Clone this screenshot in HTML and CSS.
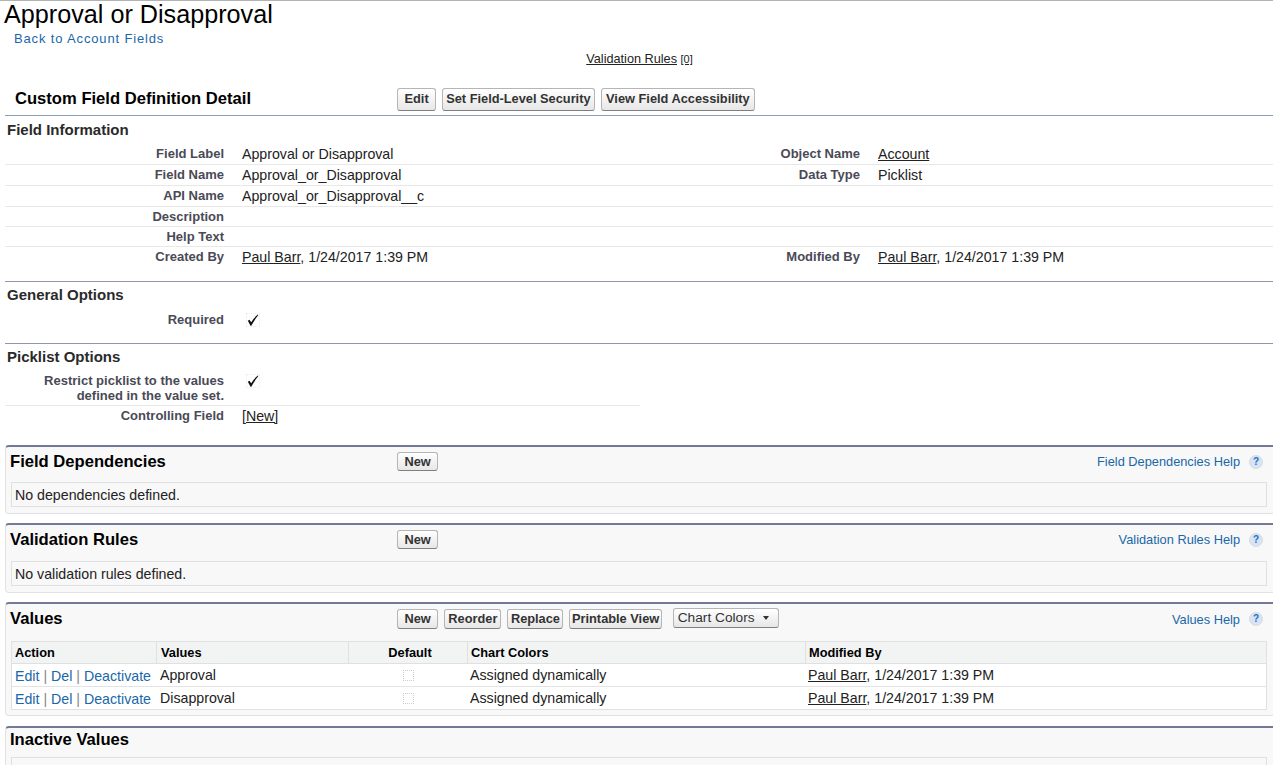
FILE: index.html
```html
<!DOCTYPE html>
<html lang="en">
<head>
<meta charset="utf-8">
<title>Approval or Disapproval</title>
<link rel="stylesheet" href="styles.css">
</head>
<body>
<header class="page-head">
  <h1 class="page-title">Approval or Disapproval</h1>
  <a class="back-link" href="#">Back to Account Fields</a>
  <div class="related"><a class="dark-link" href="#">Validation Rules</a> <a class="dark-link count" href="#">[0]</a></div>
</header>
<section class="detail">
  <div class="detail-bar">
    <h2 class="detail-title">Custom Field Definition Detail</h2>
    <div class="btns">
      <button class="btn wide">Edit</button>
      <button class="btn">Set Field-Level Security</button>
      <button class="btn roomy">View Field Accessibility</button>
    </div>
  </div>
  <h3 class="sub-head first">Field Information</h3>
  <div class="row line h21"><div class="lab">Field Label</div><div class="val">Approval or Disapproval</div><div class="lab">Object Name</div><div class="val"><a class="dark-link" href="#">Account</a></div></div>
  <div class="row line h21"><div class="lab">Field Name</div><div class="val">Approval_or_Disapproval</div><div class="lab">Data Type</div><div class="val">Picklist</div></div>
  <div class="row line h21"><div class="lab">API Name</div><div class="val">Approval_or_Disapproval__c</div><div class="lab"></div><div class="val"></div></div>
  <div class="row line h20"><div class="lab">Description</div><div class="val"></div><div class="lab"></div><div class="val"></div></div>
  <div class="row line h20"><div class="lab">Help Text</div><div class="val"></div><div class="lab"></div><div class="val"></div></div>
  <div class="row h21"><div class="lab">Created By</div><div class="val"><a class="dark-link" href="#">Paul Barr</a>, 1/24/2017 1:39 PM</div><div class="lab">Modified By</div><div class="val"><a class="dark-link" href="#">Paul Barr</a>, 1/24/2017 1:39 PM</div></div>

  <h3 class="sub-head ruled">General Options</h3>
  <div class="row h21"><div class="lab">Required</div><div class="val"><svg class="check" viewBox="2.5 1.5 10 10.5"><path d="M3 7.5 L4.4 6.6 L5.9 8.8 Q8 5 11.8 2 L12.2 2.4 Q8.5 7 6 11.8 L5.3 11.8 Z" fill="#111"/></svg></div></div>

  <h3 class="sub-head ruled second">Picklist Options</h3>
  <div class="half">
    <div class="row line tall"><div class="lab">Restrict picklist to the values<br>defined in the value set.</div><div class="val"><svg class="check" viewBox="2.5 1.5 10 10.5"><path d="M3 7.5 L4.4 6.6 L5.9 8.8 Q8 5 11.8 2 L12.2 2.4 Q8.5 7 6 11.8 L5.3 11.8 Z" fill="#111"/></svg></div></div>
    <div class="row h21"><div class="lab">Controlling Field</div><div class="val"><a class="dark-link" href="#">[New]</a></div></div>
  </div>
</section>

<section class="panel">
  <div class="panel-bar">
    <h2 class="panel-title">Field Dependencies</h2>
    <div class="btns"><button class="btn wide">New</button></div>
    <a class="help" href="#">Field Dependencies Help<span class="q">?</span></a>
  </div>
  <div class="empty">No dependencies defined.</div>
</section>

<section class="panel rules">
  <div class="panel-bar">
    <h2 class="panel-title">Validation Rules</h2>
    <div class="btns"><button class="btn wide">New</button></div>
    <a class="help" href="#">Validation Rules Help<span class="q">?</span></a>
  </div>
  <div class="empty">No validation rules defined.</div>
</section>

<section class="panel values">
  <div class="panel-bar">
    <h2 class="panel-title">Values</h2>
    <div class="btns">
      <button class="btn wide">New</button>
      <button class="btn mid">Reorder</button>
      <button class="btn">Replace</button>
      <button class="btn snug">Printable View</button>
      <button class="btn menu">Chart Colors<span class="caret"></span></button>
    </div>
    <a class="help" href="#">Values Help<span class="q">?</span></a>
  </div>
  <table class="list">
    <thead><tr><th class="c1">Action</th><th class="c2">Values</th><th class="c3">Default</th><th class="c4">Chart Colors</th><th class="c5">Modified By</th></tr></thead>
    <tbody>
      <tr><td class="act"><a class="blue" href="#">Edit</a> <span class="sep">|</span> <a class="blue" href="#">Del</a> <span class="sep">|</span> <a class="blue" href="#">Deactivate</a></td><td class="name">Approval</td><td class="ctr"><span class="box"></span></td><td>Assigned dynamically</td><td><a class="dark-link" href="#">Paul Barr</a>, 1/24/2017 1:39 PM</td></tr>
      <tr><td class="act"><a class="blue" href="#">Edit</a> <span class="sep">|</span> <a class="blue" href="#">Del</a> <span class="sep">|</span> <a class="blue" href="#">Deactivate</a></td><td class="name">Disapproval</td><td class="ctr"><span class="box"></span></td><td>Assigned dynamically</td><td><a class="dark-link" href="#">Paul Barr</a>, 1/24/2017 1:39 PM</td></tr>
    </tbody>
  </table>
</section>

<section class="panel inactive">
  <div class="panel-bar">
    <h2 class="panel-title">Inactive Values</h2>
  </div>
  <div class="empty"></div>
</section>
</body>
</html>
```
FILE: styles.css
```css
html, body { margin: 0; padding: 0; }
html { overflow: hidden; height: 765px; }
body {
  height: 765px; overflow: hidden; box-sizing: border-box;
  border-top: 1px solid #b4b4b4;
  background: #fff; color: #222;
  font: 14.2px/15px "Liberation Sans", Arial, sans-serif;
}
a { text-decoration: none; }
h1, h2, h3 { margin: 0; }
.page-head { padding-left: 4px; }
.page-title { font-size: 25.2px; line-height: 26px; font-weight: 400; color: #000; }
.back-link { display: block; margin: 3px 0 0 10px; color: #1a67a8; font-size: 13px; line-height: 17px; letter-spacing: 0.85px; }
.related { text-align: center; margin: 5px 0 0 2px; line-height: 15px; font-size: 12.7px; height: 15px; }
.dark-link { color: #222; text-decoration: underline; }
.count { font-size: 11px; }
.detail { margin-left: 5px; }
.detail-bar { display: flex; align-items: center; height: 32px; margin-top: 16px; border-bottom: 1px solid #8a9ebe; }
.detail-title { width: 392px; padding-left: 10px; box-sizing: border-box; font-size: 16.6px; line-height: 20px; color: #000; font-weight: 700; }
.btns { display: flex; align-items: center; gap: 6px; }
.btn {
  font: 700 12.8px/14px "Liberation Sans", Arial, sans-serif; color: #333;
  height: 23px; padding: 0 3px; margin: 0;
  border: 1px solid #b5b5b5; border-bottom-color: #7f7f7f; border-radius: 3px;
  background: linear-gradient(#fff, #e9e9e9 90%);
  white-space: nowrap; display: block;
}
.btn.wide { padding: 0 6.5px; }
.btn.roomy { padding: 0 4.5px; }
.sub-head { font-size: 15px; line-height: 16px; color: #2a2a2a; padding-left: 2px; font-weight: 700; }
.sub-head.first { padding-top: 6px; padding-bottom: 6px; }
.sub-head.ruled { border-top: 1px solid #9196ad; margin-top: 14px; padding-top: 5px; padding-bottom: 6px; height: 17px; }
.sub-head.second { margin-top: 13px; padding-bottom: 5px; }
.row { display: grid; grid-template-columns: 219px 399px 237px 1fr; }
.h21 { height: 20px; }
.h20 { height: 19px; }
.line { border-bottom: 1px solid #e8e8e8; }
.lab { font-size: 13px; font-weight: 700; color: #4a4a56; text-align: right; padding-top: 2px; line-height: 15px; }
.val { padding: 3px 0 0 18px; color: #222; line-height: 15px; }
.half { width: 635px; }
.half .row { grid-template-columns: 219px 1fr; }
.tall { height: 34px; }
.check { width: 14px; height: 14px; display: block; margin-left: 4px; border: 1px dotted #ececec; box-sizing: border-box; }
.panel {
  margin: 19px 0 0 5px; border: 1px solid #e2e2e2; border-top: 2px solid #747a96; border-right: 0;
  border-radius: 4px 0 0 4px; background: #f8f8f8; padding: 0 6px 6px 5px;
}
.panel + .panel { margin-top: 9px; }
.panel.values { margin-top: 9px; padding-bottom: 5px; }
.panel.inactive { margin-top: 10px; padding-bottom: 0; border-bottom: 0; border-radius: 4px 0 0 0; }
.panel-bar { display: flex; align-items: center; height: 29px; margin-bottom: 6px; }
.rules .panel-bar { margin-bottom: 7px; }
.values .panel-bar { height: 30px; margin-bottom: 7px; }
.inactive .panel-bar { height: 23px; }
.panel-title { width: 387px; margin-left: -1px; font-size: 16.6px; line-height: 20px; color: #000; font-weight: 700; }
.panel .btn { height: 19px; padding: 0 2.5px; }
.panel .btn.wide { padding: 0 6.5px; }
.panel .btn.mid { padding: 0 3px; }
.panel .btn.snug { padding: 0 1.5px; }
.values .btn { height: 20px; }
.help { margin-left: auto; display: flex; align-items: center; color: #1a67a8; font-size: 12.8px; }
.q {
  width: 14px; height: 14px; border-radius: 50%; margin: 0 4px 0 9px;
  background: #d6e4f5; color: #2a6fc0; border: 1px solid #dcdcdc; box-sizing: border-box;
  font: 700 10px/12px "Liberation Sans", sans-serif; text-align: center;
}
.empty { border: 1px solid #e0e0e0; height: 25px; padding: 5px 3px; box-sizing: border-box; line-height: 15px; color: #222; }
.inactive .empty { height: 8px; padding: 0; border-bottom: 0; }
.list { border-collapse: separate; border-spacing: 0; width: 100%; border: 1px solid #e0e0e0; background: #fff; table-layout: fixed; }
.list th { background: #f2f3f3; font-size: 12.8px; font-weight: 700; color: #000; text-align: left; padding: 0 3px; height: 22px; box-sizing: border-box; border-right: 1px solid #e0e0e0; border-bottom: 1px solid #e0e0e0; }
.list th.c2 { padding-left: 4px; }
.list th:last-child { border-right: 0; }
.list td { height: 23px; box-sizing: border-box; padding: 0 2px; border-bottom: 1px solid #e3e3e3; white-space: nowrap; }
.list tr:last-child td { border-bottom: 0; height: 22px; }
.list th.c3 { text-align: center; padding-left: 7px; }
.list td.act { padding: 2px 0 0 3px; }
.list td.name { padding-left: 3px; }
.c1 { width: 145px; } .c2 { width: 192px; } .c3 { width: 119px; } .c4 { width: 338px; }
.blue { color: #1a67a8; } .sep { color: #888; }
.ctr { text-align: center; }
.box { display: inline-block; width: 11px; height: 11px; box-sizing: border-box; border: 1px dotted #ccc; vertical-align: middle; }
.panel .btn.menu { display: flex; align-items: center; font-weight: 400; font-size: 13.7px; margin: 0 0 2px 5px; padding: 0 9px 0 4px; }
.caret { width: 0; height: 0; border: 3px solid transparent; border-top: 4px solid #333; border-bottom: 0; margin-left: 8px; }
```
